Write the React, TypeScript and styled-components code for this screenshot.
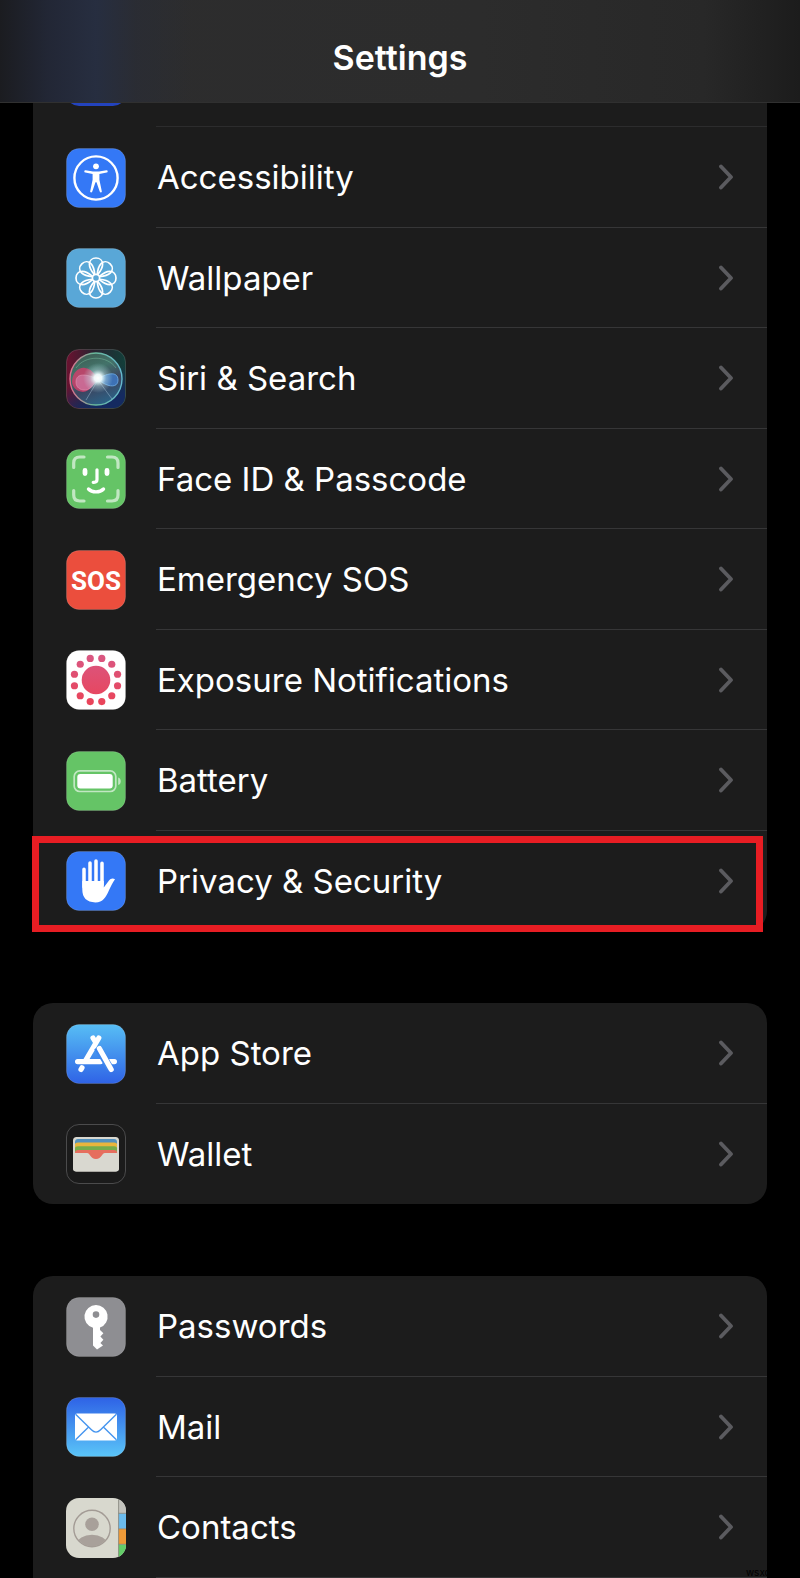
import React from 'react';
import styled, { createGlobalStyle } from 'styled-components';

const GlobalStyle = createGlobalStyle`
  * {
    box-sizing: border-box;
  }

  body {
    margin: 0;
    background-color: #000;
    color: #fff;
    font-family: Inter, 'Liberation Sans', sans-serif;
  }
`;

const Page = styled.div`
  position: relative;
  overflow: hidden;
`;
const Header = styled.header`
  height: 103px;
  display: flex;
  justify-content: center;
  align-items: center;
  padding-top: 14px;
  border-bottom: 1px solid #303030;
  background:
    linear-gradient(90deg, #1b1c20 0%, rgba(33, 38, 54, 0.9) 6%, rgba(38, 46, 66, 0.9) 12%, rgba(41, 44, 54, 0.7) 17%, rgba(44, 44, 46, 0) 24%),
    linear-gradient(90deg, #2d2d2e 0%, #2c2c2c 60%, #282828 88%, #1c1c1c 100%);
`;
const Title = styled.h1`
  margin: 0;
  font-size: 34px;
  line-height: 40px;
  font-weight: 600;
`;
const List = styled.main`
  display: flex;
  flex-direction: column;
  gap: 72px;
  padding: 0 33px;
`;
const Group = styled.nav<{ $openTop?: boolean; $openBottom?: boolean }>`
  background-color: #1c1c1c;
  border-radius: ${({ $openTop, $openBottom }) => (
    `${$openTop ? '0 0' : '20px 20px'} ${$openBottom ? '0 0' : '20px 20px'}`
  )};
`;
const Row = styled.a`
  position: relative;
  height: 101px;
  display: flex;
  align-items: center;
  gap: 30px;
  padding-left: 33px;
  color: inherit;
  text-decoration: none;

  &:nth-of-type(even) {
    height: 100px;
  }
`;
// the row that has scrolled up under the header
const PeekRow = styled.div`
  height: 24px;
  display: flex;
  align-items: flex-end;
  gap: 30px;
  padding-left: 33px;
  overflow: hidden;
`;
const PeekTile = styled.div`
  width: 60px;
  height: 60px;
  margin-bottom: 21px;
  flex: none;
  border-radius: 13px;
  background-color: #2343bd;
`;
const Divider = styled.div`
  flex: 1;
  border-bottom: 1px solid #2c2c2d;
`;
const RowBody = styled.div<{ $last?: boolean }>`
  flex: 1;
  align-self: stretch;
  display: flex;
  align-items: center;
  justify-content: space-between;
  padding: 0 33px 0 1px;
  border-bottom: 1px solid ${({ $last }) => ($last ? 'transparent' : '#363637')};
`;
const Label = styled.span`
  font-size: 33px;
  line-height: 40px;
`;
const Icon = styled.svg`
  width: 60px;
  height: 60px;
  flex: none;
  display: block;
`;
const ChevronIcon = styled.svg`
  width: 16px;
  height: 26px;
  flex: none;
`;
const Highlight = styled.span`
  position: absolute;
  top: 5px;
  right: 4px;
  bottom: -1px;
  left: -1px;
  border: 7px solid #e71d23;
  pointer-events: none;
`;
const Watermark = styled.small`
  position: absolute;
  right: 0;
  bottom: 0;
  color: #000;
  font-size: 10px;
  line-height: 12px;
`;

const Tile = ({ fill }: { fill: string }) => (
  <rect x="0.5" y="0.5" width="59" height="59" rx="12.5" fill={fill} stroke="#fff" strokeOpacity="0.14" />
);

const Accessibility = () => (
  <Icon viewBox="0 0 60 60">
    <Tile fill="#3478f6" />
    <circle cx="30" cy="30" r="21.6" fill="none" stroke="#fff" strokeWidth="2.4" />
    <circle cx="30" cy="18.3" r="2.9" fill="#fff" />
    <path
      d="M19.6 22.2 27 23.4 H33 L40.4 22.2 C42 22 42.2 24.2 40.7 24.6 L33.4 25.9 V31.8 L35.8 43.2 C36.1 44.6 34.2 44.9 33.7 43.4 L30.5 34.2 H29.5 L26.3 43.4 C25.8 44.9 23.9 44.6 24.2 43.2 L26.6 31.8 V25.9 L19.3 24.6 C17.8 24.2 18 22 19.6 22.2Z"
      fill="#fff"
    />
  </Icon>
);

const Wallpaper = () => (
  <Icon viewBox="0 0 60 60">
    <Tile fill="#59a7d7" />
    <g fill="none" stroke="#fff" strokeWidth="1.7">
      {[0, 45, 90, 135, 180, 225, 270, 315].map((angle) => (
        <path
          key={angle}
          transform={`rotate(${angle} 30 30)`}
          d="M30 10 C33.8 10 36.6 12.6 36.6 16.2 C36.6 20.4 33.8 24 31.6 26.6 M30 10 C26.2 10 23.4 12.6 23.4 16.2 C23.4 20.4 26.2 24 28.4 26.6"
        />
      ))}
      <circle cx="30" cy="30" r="3.6" />
    </g>
  </Icon>
);

const Siri = () => (
  <Icon viewBox="0 0 60 60">
    <defs>
      <linearGradient id="siriBase" x1="0" y1="0" x2="1" y2="0">
        <stop offset="0" stopColor="#6b1230" />
        <stop offset="0.45" stopColor="#2b2230" />
        <stop offset="1" stopColor="#123f3a" />
      </linearGradient>
      <linearGradient id="siriFloor" x1="0" y1="0" x2="0.4" y2="1">
        <stop offset="0.55" stopColor="#172a5a" stopOpacity="0" />
        <stop offset="1" stopColor="#142a60" />
      </linearGradient>
      <linearGradient id="siriOrb" x1="0.2" y1="0" x2="0.6" y2="1">
        <stop offset="0" stopColor="#3c5a50" />
        <stop offset="0.35" stopColor="#43736a" />
        <stop offset="0.65" stopColor="#3c4560" />
        <stop offset="1" stopColor="#2b6286" />
      </linearGradient>
      <linearGradient id="siriRim" x1="0" y1="0.5" x2="1" y2="0.5">
        <stop offset="0" stopColor="#e16d8e" />
        <stop offset="0.45" stopColor="#69b999" />
        <stop offset="1" stopColor="#66b9cf" />
      </linearGradient>
      <radialGradient id="siriGlow">
        <stop offset="0" stopColor="#fff" />
        <stop offset="0.25" stopColor="#f2ffff" stopOpacity="0.95" />
        <stop offset="0.55" stopColor="#c9eff2" stopOpacity="0.4" />
        <stop offset="1" stopColor="#b7eaf0" stopOpacity="0" />
      </radialGradient>
    </defs>
    <Tile fill="url(#siriBase)" />
    <rect x="1" y="1" width="58" height="58" rx="12" fill="url(#siriFloor)" />
    <circle cx="30" cy="30" r="26" fill="url(#siriOrb)" stroke="url(#siriRim)" strokeWidth="1.4" />
    <path d="M6 32 C7 23 13 18 19 19 C26 20 28 25 32 29 C28 34 24 43 17 43 C10 42 6 38 6 32Z" fill="#d43d6b" fillOpacity="0.8" />
    <path d="M10 33 C10 26 16 23 32 30 C28 36 23 42 17 41 C12 40 10 37 10 33Z" fill="#d98ab5" fillOpacity="0.55" stroke="#eca5c2" strokeOpacity="0.6" strokeWidth="0.8" />
    <path d="M32 30 C39 25 52 21 52 31 C52 40 40 38 32 30Z" fill="#3f7fd0" fillOpacity="0.75" stroke="#70aee7" strokeWidth="0.8" />
    <path d="M32 31 20 51 M32 31 46 50" stroke="#a9c6dc" strokeOpacity="0.45" />
    <path d="M10 19 C19 6 41 6 50 19" fill="none" stroke="#75b99c" strokeOpacity="0.5" />
    <circle cx="32" cy="29" r="15" fill="url(#siriGlow)" />
  </Icon>
);

const FaceId = () => (
  <Icon viewBox="0 0 60 60">
    <Tile fill="#65c466" />
    <g fill="none" stroke="#fff" strokeLinecap="round">
      <path
        d="M7.7 18.5 V14 Q7.7 8 13.7 8 H18 M41.5 8 H46 Q52 8 52 14 V18.5 M52 41.5 V46 Q52 52 46 52 H41.5 M18 52 H13.7 Q7.7 52 7.7 46 V41.5"
        strokeWidth="3.2"
        strokeOpacity="0.6"
      />
      <path d="M19 21.5 V24.5 M41 21.5 V24.5" strokeWidth="4.8" />
      <path d="M31 20.8 V30.5 Q31 33.3 28 33.3 H27.2" strokeWidth="3.2" />
      <path d="M22.5 40 C26 43.8 34 43.8 37.5 40" strokeWidth="3.4" />
    </g>
  </Icon>
);

const Sos = () => (
  <Icon viewBox="0 0 60 60">
    <Tile fill="#eb4e3d" />
    <text
      x="30"
      y="39.5"
      fill="#fff"
      fontFamily="Roboto, 'Liberation Sans', sans-serif"
      fontSize="26"
      fontWeight="700"
      textAnchor="middle"
    >
      SOS
    </text>
  </Icon>
);

const Exposure = () => (
  <Icon viewBox="0 0 60 60">
    <defs>
      <linearGradient id="exposure" x1="0" y1="5" x2="0" y2="55" gradientUnits="userSpaceOnUse">
        <stop offset="0" stopColor="#d95782" />
        <stop offset="1" stopColor="#ea4358" />
      </linearGradient>
    </defs>
    <Tile fill="#fff" />
    <g fill="url(#exposure)">
      <circle cx="30" cy="30" r="14.3" />
      {Array.from({ length: 12 }, (_, i) => {
        const angle = ((i * 30 + 15) * Math.PI) / 180;
        return (
          <circle
            key={i}
            cx={30 + 22.3 * Math.cos(angle)}
            cy={30 + 22.3 * Math.sin(angle)}
            r="3.6"
          />
        );
      })}
    </g>
  </Icon>
);

const Battery = () => (
  <Icon viewBox="0 0 60 60">
    <Tile fill="#65c466" />
    <rect x="8.2" y="19.9" width="41.6" height="20.6" rx="5.6" fill="none" stroke="#fff" strokeWidth="1.7" strokeOpacity="0.6" />
    <rect x="11.3" y="23" width="35.4" height="14.4" rx="3" fill="#fff" />
    <path d="M52.2 26.4 C55.6 27.4 55.6 33 52.2 34Z" fill="#fff" fillOpacity="0.6" />
  </Icon>
);

const Hand = () => (
  <Icon viewBox="0 0 60 60">
    <Tile fill="#3478f6" />
    <g stroke="#fff" strokeLinecap="round" strokeWidth="3.5">
      <path d="M18 18.2 V36 M24 12 V32 M30 10 V32 M36 12.2 V34" />
    </g>
    <path
      d="M16.3 30 H37.8 V36.4 L43 29.4 C44.4 27.4 47 26.8 49 28.2 C46.4 31.6 44.8 35.6 43 39.2 C39.6 46.6 37.2 51.4 29.4 51.4 C20.6 51.4 16.3 46.6 16.3 38.6Z"
      fill="#fff"
    />
  </Icon>
);

const AppStore = () => (
  <Icon viewBox="0 0 60 60">
    <defs>
      <linearGradient id="appStore" x1="0" y1="0" x2="0" y2="1">
        <stop offset="0" stopColor="#57bef5" />
        <stop offset="1" stopColor="#2f63e6" />
      </linearGradient>
    </defs>
    <Tile fill="url(#appStore)" />
    <g fill="none" stroke="#fff" strokeLinecap="round" strokeWidth="5.2">
      <path d="M32.8 14 19.6 36.6" />
      <path d="M11.6 37.6 H34.5 M44.5 37.6 H48.4" />
      <path d="M16 43.8 15 45.6" />
    </g>
    <path d="M31.4 23.4 44 44" stroke="#3d87ee" strokeWidth="7.4" />
    <path d="M33.4 24.4 45.2 45.6 M27 14 29.4 18" stroke="#fff" strokeLinecap="round" strokeWidth="5.2" />
  </Icon>
);

const Wallet = () => (
  <Icon viewBox="0 0 60 60">
    <rect x="0.5" y="0.5" width="59" height="59" rx="12.5" fill="#1b1b1b" stroke="#4b4b4c" />
    <rect x="7" y="13" width="46" height="34.5" rx="3.5" fill="#d9d8d0" />
    <path d="M9 18 Q9 15 12 15 H48 Q51 15 51 18 V20 H9Z" fill="#5391bd" />
    <path d="M9 21 Q9 18.6 12 18.6 H48 Q51 18.6 51 21 V24 H9Z" fill="#e9b53c" />
    <path d="M9 24.5 Q9 22.3 12 22.3 H48 Q51 22.3 51 24.5 V28 H9Z" fill="#76ac4b" />
    <path d="M9 28.5 Q9 26 12 26 H48 Q51 26 51 28.5 V36 H9Z" fill="#e66e5e" />
    <path d="M7 29 H21 C24.5 29 24 35 30 35 C36 35 35.5 29 39 29 H53 V44 Q53 47.5 49.5 47.5 H10.5 Q7 47.5 7 44Z" fill="#d9d8d0" />
  </Icon>
);

const Passwords = () => (
  <Icon viewBox="0 0 60 60">
    <Tile fill="#8e8e92" />
    <path
      fillRule="evenodd"
      fill="#fff"
      d="M30 8 A11.6 11.6 0 0 1 34 30.5 V33 L37.4 36.2 L34.4 39.6 L37.4 42.8 L34.4 46 L37 48.4 L31 52.4 L27 48.6 V30.8 A11.6 11.6 0 0 1 30 8Z M30 14.3 A3.3 3.3 0 1 0 30 20.9 A3.3 3.3 0 1 0 30 14.3Z"
    />
  </Icon>
);

const Mail = () => (
  <Icon viewBox="0 0 60 60">
    <defs>
      <linearGradient id="mail" x1="0" y1="0" x2="0" y2="1">
        <stop offset="0" stopColor="#2e62e6" />
        <stop offset="1" stopColor="#5ac5f8" />
      </linearGradient>
    </defs>
    <Tile fill="url(#mail)" />
    <rect x="9" y="16.5" width="42" height="27" rx="2" fill="#fff" />
    <path
      d="M9.6 17.2 25.4 32.8 Q30 37.4 34.6 32.8 L50.4 17.2 M9.6 42.8 22.6 30 M50.4 42.8 37.4 30"
      fill="none"
      stroke="#4695ef"
      strokeWidth="1.4"
    />
  </Icon>
);

const Contacts = () => (
  <Icon viewBox="0 0 60 60">
    <defs>
      <clipPath id="contactsTile"><rect width="60" height="60" rx="13" /></clipPath>
      <clipPath id="contactsFace"><circle cx="26" cy="30.5" r="17.8" /></clipPath>
    </defs>
    <g clipPath="url(#contactsTile)">
      <rect width="60" height="60" fill="#d8d8ce" />
      <rect x="52.6" width="7.4" height="15" fill="#c3c3bd" />
      <rect x="52.6" y="15.5" width="7.4" height="15" fill="#6cbced" />
      <rect x="52.6" y="31" width="7.4" height="15" fill="#ef9a38" />
      <rect x="52.6" y="46.5" width="7.4" height="14" fill="#63cc68" />
      <path d="M52.6 0 V60 M52.6 15.3 H60 M52.6 30.8 H60 M52.6 46.3 H60" stroke="#77776f" strokeOpacity="0.7" />
      <circle cx="26" cy="30.5" r="18.2" fill="none" stroke="#a39b95" strokeWidth="1.4" />
      <circle cx="26" cy="26.2" r="6.8" fill="#a8a09a" />
      <ellipse cx="26" cy="46.4" rx="15" ry="9.6" fill="#a8a09a" clipPath="url(#contactsFace)" />
    </g>
  </Icon>
);

const Chevron = () => (
  <ChevronIcon viewBox="0 0 16 26">
    <path d="M3 2.5 13 13 3 23.5" fill="none" stroke="#5b5b5f" strokeWidth="3.8" strokeLinecap="round" strokeLinejoin="round" />
  </ChevronIcon>
);

interface ISetting {
  id: string;
  label: string;
  icon: React.ReactNode;
  highlighted?: boolean;
}

const deviceSettings: ISetting[] = [
  { id: 'accessibility', label: 'Accessibility', icon: <Accessibility /> },
  { id: 'wallpaper', label: 'Wallpaper', icon: <Wallpaper /> },
  { id: 'siri', label: 'Siri & Search', icon: <Siri /> },
  { id: 'face-id', label: 'Face ID & Passcode', icon: <FaceId /> },
  { id: 'sos', label: 'Emergency SOS', icon: <Sos /> },
  { id: 'exposure', label: 'Exposure Notifications', icon: <Exposure /> },
  { id: 'battery', label: 'Battery', icon: <Battery /> },
  { id: 'privacy', label: 'Privacy & Security', icon: <Hand />, highlighted: true },
];
const storeSettings: ISetting[] = [
  { id: 'app-store', label: 'App Store', icon: <AppStore /> },
  { id: 'wallet', label: 'Wallet', icon: <Wallet /> },
];
const appSettings: ISetting[] = [
  { id: 'passwords', label: 'Passwords', icon: <Passwords /> },
  { id: 'mail', label: 'Mail', icon: <Mail /> },
  { id: 'contacts', label: 'Contacts', icon: <Contacts /> },
];

const Rows = ({ settings, open }: { settings: ISetting[]; open?: boolean }) => (
  <>
    {settings.map(({ id, label, icon, highlighted }, index) => (
      <Row key={id} href={`#${id}`}>
        {icon}
        <RowBody $last={!open && index === settings.length - 1}>
          <Label>{label}</Label>
          <Chevron />
        </RowBody>
        {highlighted && <Highlight />}
      </Row>
    ))}
  </>
);

export default function App() {
  return (
    <Page>
      <GlobalStyle />
      <Header>
        <Title>Settings</Title>
      </Header>
      <List>
        <Group $openTop>
          <PeekRow>
            <PeekTile />
            <Divider />
          </PeekRow>
          <Rows settings={deviceSettings} />
        </Group>
        <Group>
          <Rows settings={storeSettings} />
        </Group>
        <Group $openBottom>
          <Rows settings={appSettings} open />
        </Group>
      </List>
      <Watermark>wsxdn.com</Watermark>
    </Page>
  );
}
